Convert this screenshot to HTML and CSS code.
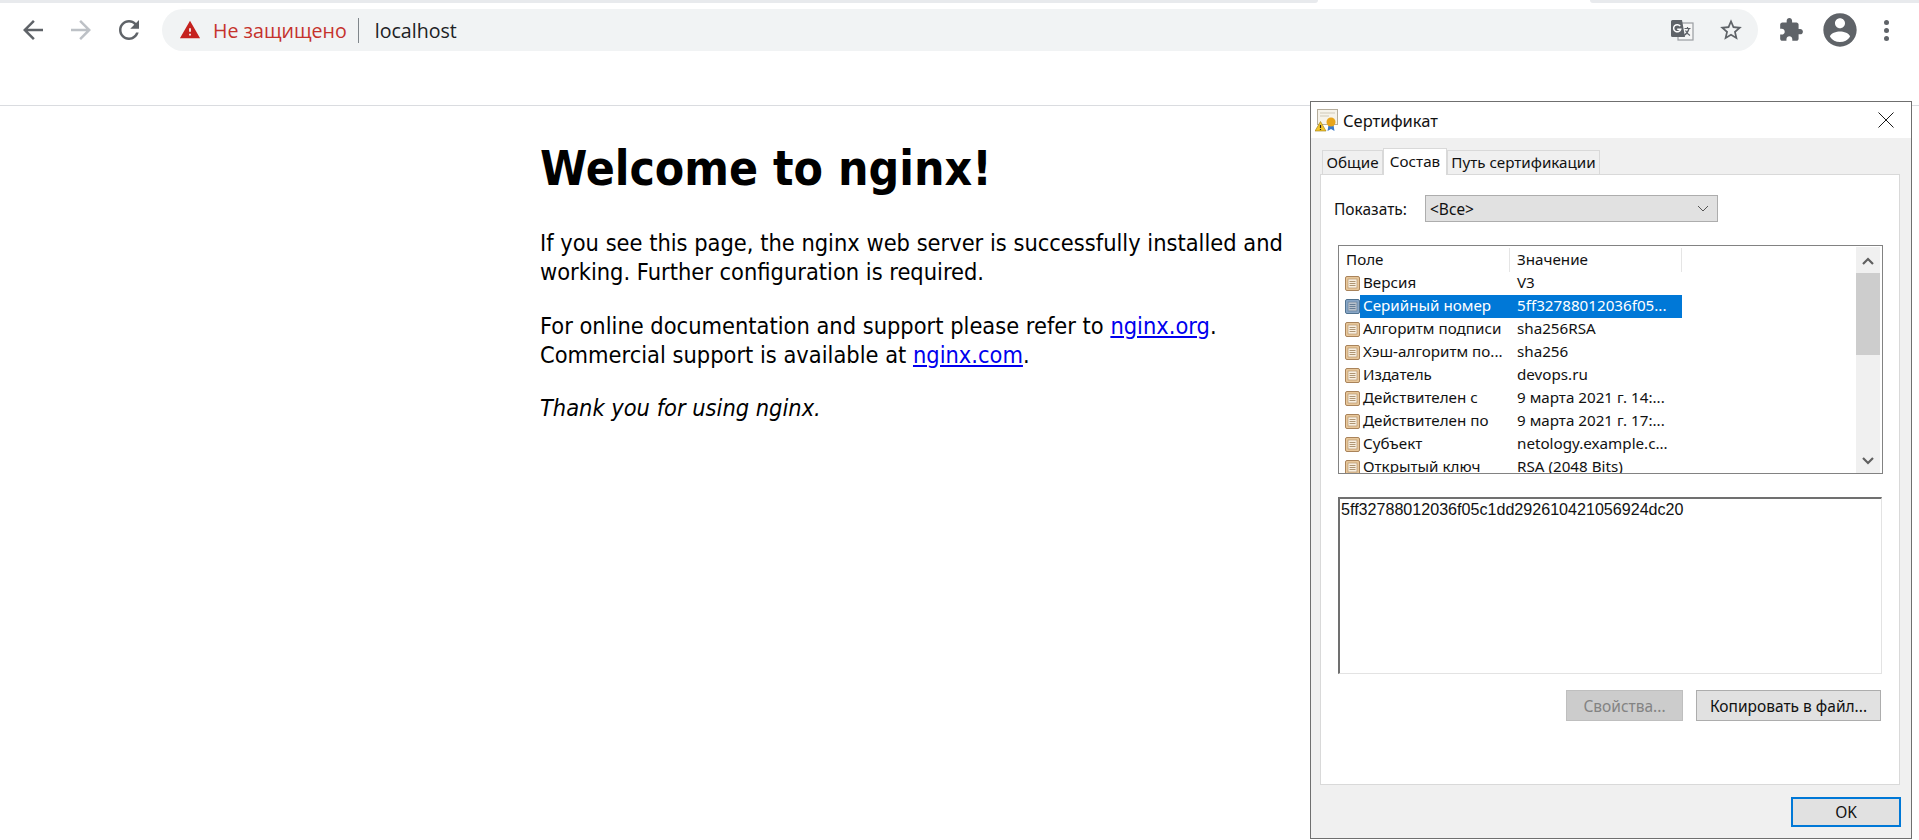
FILE: index.html
```html
<!DOCTYPE html>
<html lang="ru">
<head>
<meta charset="utf-8">
<title>Welcome to nginx!</title>
<link rel="stylesheet" href="styles.css">
</head>
<body>
<svg class="defs" width="0" height="0" aria-hidden="true">
  <symbol id="field" viewBox="0 0 15 15">
    <rect x="0.5" y="0.5" width="14" height="14" rx="1.5" fill="#e8c79a" stroke="#a9835a"/>
    <rect x="3" y="3" width="9" height="9" fill="#f8efe0" stroke="#b59670" stroke-width="0.7"/>
    <path d="M4.5 5.5h6M4.5 7.5h6M4.5 9.5h6" stroke="#a58a68" stroke-width="0.9"/>
  </symbol>
</svg>
<div class="tabstrip"><span class="strip strip-left"></span><span class="strip strip-right"></span></div>
<header class="toolbar">
  <nav class="nav">
    <svg class="nav-icon" viewBox="0 0 24 24"><path d="M20 11H7.83l5.59-5.59L12 4l-8 8 8 8 1.41-1.41L7.83 13H20v-2z"/></svg>
    <svg class="nav-icon nav-off" viewBox="0 0 24 24"><path d="M4 11h12.17l-5.59-5.59L12 4l8 8-8 8-1.41-1.41L16.17 13H4v-2z"/></svg>
    <svg class="nav-icon" viewBox="0 0 24 24"><path d="M17.65 6.35C16.2 4.9 14.21 4 12 4c-4.42 0-7.99 3.58-7.99 8s3.57 8 7.99 8c3.73 0 6.84-2.55 7.73-6h-2.08c-.82 2.33-3.04 4-5.65 4-3.31 0-6-2.69-6-6s2.69-6 6-6c1.66 0 3.14.69 4.22 1.78L13 11h7V4l-2.35 2.35z"/></svg>
  </nav>
  <div class="omnibox">
    <svg class="warn" viewBox="0 0 24 24"><path d="M1 21h22L12 2 1 21zm12-3h-2v-2h2v2zm0-4h-2v-4h2v4z"/></svg>
    <span class="insecure">Не защищено</span>
    <span class="sep"></span>
    <span class="host">localhost</span>
    <span class="grow"></span>
    <svg class="translate" viewBox="0 0 24 22">
      <rect x="8" y="4" width="15" height="17" fill="#f6f6f6" stroke="#9a9da1" stroke-width="1.2"/>
      <path d="M1 2.500A1.500 1.500 0 0 1 2.500 1H12l3 17H2.500A1.500 1.500 0 0 1 1 16.500z" fill="#5f6368"/>
      <path d="M10.200 7.200a3.600 3.600 0 1 0 .5 3H7.200" fill="none" stroke="#fff" stroke-width="1.500"/>
      <path d="M14.500 9.500h6M17.500 8v1.500M19 9.500c-.8 3.400-2.600 5.500-5 7M15.500 11.500c.9 2 2.500 3.700 4.500 5" fill="none" stroke="#5f6368" stroke-width="1.200"/>
    </svg>
    <svg class="star" viewBox="0 0 24 24"><path d="M22 9.240l-7.190-.620L12 2 9.190 8.630 2 9.240l5.460 4.730L5.820 21 12 17.270 18.180 21l-1.630-7.030L22 9.240zM12 15.400l-3.760 2.270 1-4.280-3.320-2.880 4.380-.380L12 6.100l1.710 4.040 4.380.380-3.320 2.880 1 4.280L12 15.400z"/></svg>
  </div>
  <div class="actions">
    <svg class="puzzle" viewBox="0 0 24 24"><path d="M20.500 11H19V7c0-1.100-.9-2-2-2h-4V3.500C13 2.120 11.880 1 10.500 1S8 2.120 8 3.500V5H4c-1.100 0-1.990.9-1.990 2v3.800H3.500c1.490 0 2.700 1.210 2.700 2.700s-1.210 2.700-2.700 2.700H2V20c0 1.100.9 2 2 2h3.800v-1.500c0-1.490 1.210-2.700 2.700-2.700 1.490 0 2.700 1.210 2.700 2.700V22H17c1.100 0 2-.9 2-2v-4h1.500c1.380 0 2.500-1.120 2.500-2.500S21.880 11 20.500 11z"/></svg>
    <svg class="avatar" viewBox="0 0 24 24"><path d="M12 2C6.480 2 2 6.480 2 12s4.480 10 10 10 10-4.480 10-10S17.520 2 12 2zm0 3c1.660 0 3 1.340 3 3s-1.340 3-3 3-3-1.340-3-3 1.340-3 3-3zm0 14.200c-2.500 0-4.710-1.280-6-3.220.03-1.990 4-3.080 6-3.080 1.990 0 5.970 1.090 6 3.080-1.290 1.940-3.500 3.220-6 3.220z"/></svg>
    <span class="dots"><i></i><i></i><i></i></span>
  </div>
</header>
<main class="page">
  <h1>Welcome to nginx!</h1>
  <p>If you see this page, the nginx web server is successfully installed and working. Further configuration is required.</p>
  <p>For online documentation and support please refer to <a href="#">nginx.org</a>.<br>Commercial support is available at <a href="#">nginx.com</a>.</p>
  <p><em>Thank you for using nginx.</em></p>
</main>
<section class="dialog">
  <div class="titlebar">
    <svg class="cert" viewBox="0 0 24 24">
      <rect x="2.500" y="1.500" width="20" height="15" fill="#f6f3ea" stroke="#b5ad9c"/>
      <path d="M5 5h15M5 8h9" stroke="#cfc9b8"/>
      <path d="M13.500 17l-1 6 3.500-2 3.500 2-1-6z" fill="#3a78c8"/>
      <circle cx="16" cy="14" r="4.500" fill="#e8a51c"/>
      <path d="M5.500 13.500 11 23H0z" fill="#f3c52c" stroke="#9a7a10" stroke-width="0.600"/>
      <path d="M5.500 17v3M5.500 21v1" stroke="#222" stroke-width="1.200"/>
    </svg>
    <span class="title">Сертификат</span>
    <svg class="close" viewBox="0 0 16 16"><path d="M.5.500l15 15M15.500.500l-15 15"/></svg>
  </div>
  <div class="body">
    <div class="tabs">
      <span class="tab tab-general">Общие</span>
      <span class="tab tab-active">Состав</span>
      <span class="tab tab-path">Путь сертификации</span>
    </div>
    <div class="panel">
      <div class="show">
        <span class="show-label">Показать:</span>
        <div class="select"><span>&lt;Все&gt;</span>
          <svg class="select-arrow" viewBox="0 0 12 7"><path d="M1 1l5 5 5-5"/></svg>
        </div>
      </div>
      <div class="list">
        <div class="list-main">
          <div class="row head"><span class="c1 hc">Поле</span><span class="c2 hc">Значение</span></div>
          <div class="row"><svg class="ficon"><use href="#field"/></svg><span class="c1">Версия</span><span class="c2">V3</span></div>
          <div class="row selected"><svg class="ficon"><use href="#field"/></svg><span class="c1">Серийный номер</span><span class="c2">5ff32788012036f05...</span></div>
          <div class="row"><svg class="ficon"><use href="#field"/></svg><span class="c1">Алгоритм подписи</span><span class="c2">sha256RSA</span></div>
          <div class="row"><svg class="ficon"><use href="#field"/></svg><span class="c1">Хэш-алгоритм по...</span><span class="c2">sha256</span></div>
          <div class="row"><svg class="ficon"><use href="#field"/></svg><span class="c1">Издатель</span><span class="c2">devops.ru</span></div>
          <div class="row"><svg class="ficon"><use href="#field"/></svg><span class="c1">Действителен с</span><span class="c2">9 марта 2021 г. 14:...</span></div>
          <div class="row"><svg class="ficon"><use href="#field"/></svg><span class="c1">Действителен по</span><span class="c2">9 марта 2021 г. 17:...</span></div>
          <div class="row"><svg class="ficon"><use href="#field"/></svg><span class="c1">Субъект</span><span class="c2">netology.example.c...</span></div>
          <div class="row"><svg class="ficon"><use href="#field"/></svg><span class="c1">Открытый ключ</span><span class="c2">RSA (2048 Bits)</span></div>
        </div>
        <div class="scrollbar">
          <svg class="sb-arrow" viewBox="0 0 12 8"><path d="M1 7l5-5 5 5"/></svg>
          <div class="thumb"></div>
          <span class="grow"></span>
          <svg class="sb-arrow" viewBox="0 0 12 8"><path d="M1 1l5 5 5-5"/></svg>
        </div>
      </div>
      <div class="value">5ff32788012036f05c1dd292610421056924dc20</div>
      <div class="buttons">
        <span class="btn btn-off">Свойства...</span>
        <span class="btn btn-copy">Копировать в файл...</span>
      </div>
    </div>
    <div class="footer"><span class="btn btn-ok">OK</span></div>
  </div>
</section>
</body>
</html>
```
FILE: styles.css
```css
* { box-sizing: border-box; }
html, body { margin: 0; height: 100%; overflow: hidden; background: #fff; }
body { font-family: "DejaVu Sans Condensed", "DejaVu Sans", sans-serif; color: #000; }
.defs { position: absolute; }
.grow { flex: 1; }

.tabstrip { display: flex; justify-content: space-between; height: 3px; }
.strip { background: #e8eaed; height: 3px; }
.strip-left { width: 1318px; border-bottom-right-radius: 3px; }
.strip-right { width: 329px; border-bottom-left-radius: 3px; }

.toolbar { height: 103px; border-bottom: 1px solid #dadce0; display: flex; align-items: flex-start; padding: 6px 0 0 18px; }
.nav { display: flex; gap: 18px; margin-top: 6px; }
.nav-icon { width: 30px; height: 30px; fill: #5f6368; display: block; }
.nav-off { fill: #bdc1c6; }
.omnibox { margin-left: 18px; width: 1596px; height: 42px; border-radius: 21px; background: #f1f3f4; display: flex; align-items: center; padding: 0 14.500px 0 17px; font-family: "Open Sans", sans-serif; font-size: 19.600px; }
.warn { width: 22px; height: 22px; fill: #c5221f; margin-right: 12px; }
.insecure { color: #c5322c; }
.sep { width: 1px; height: 25px; background: #80868b; margin: 0 16px 0 11px; }
.host { color: #202124; }
.translate { width: 24px; height: 22px; margin-right: 24px; }
.star { width: 26px; height: 26px; fill: #5f6368; }
.actions { display: flex; align-items: center; height: 42px; }
.puzzle { width: 26px; height: 26px; fill: #5f6368; margin-left: 20px; }
.avatar { width: 40px; height: 40px; fill: #5f6368; margin-left: 16px; }
.dots { display: flex; flex-direction: column; gap: 3px; margin-left: 24px; }
.dots i { display: block; width: 5px; height: 5px; border-radius: 50%; background: #5f6368; }

.page { width: 800px; margin-left: 540px; padding-top: 34px; font-size: 23.400px; line-height: 29px; }
.page h1 { font-size: 47.700px; line-height: 58px; margin: 0 0 31px; font-weight: 700; }
.page p { margin: 0 0 24.500px; width: 752px; }
.page a { color: #0000ee; }

.dialog { position: absolute; left: 1310px; top: 101px; width: 602px; height: 738px; border: 1px solid #6f6f6f; background: #f0f0f0; font-family: "Noto Sans", sans-serif; font-size: 15.200px; display: flex; flex-direction: column; }
.titlebar { height: 36px; background: #fff; display: flex; align-items: center; padding: 0 17px 0 4px; flex: none; }
.cert { width: 24px; height: 24px; margin-right: 4px; }
.title { font-size: 16.500px; color: #111; flex: 1; }
.close { width: 16px; height: 16px; fill: none; stroke: #1a1a1a; stroke-width: 1; }
.body { flex: 1; display: flex; flex-direction: column; padding: 10px 11px 0 9px; }
.tabs { display: flex; align-items: flex-end; padding-left: 2px; height: 27px; margin-bottom: -1px; position: relative; }
.tab { height: 24px; margin-bottom: 1px; line-height: 22px; text-align: center; background: #f0f0f0; border: 1px solid #d9d9d9; border-bottom: none; white-space: nowrap; color: #111; }
.tab-general { width: 61px; }
.tab-path { width: 153px; }
.tab-active { width: 64px; height: 27px; margin-bottom: 0; background: #fff; line-height: 24px; }
.panel { height: 611px; background: #fff; border: 1px solid #d9d9d9; padding: 20px 16px 0 17px; display: flex; flex-direction: column; }
.show { display: flex; align-items: center; height: 27px; margin-left: -4px; font-size: 15.500px; color: #111; }
.show-label { width: 91px; }
.select { width: 293px; height: 27px; background: #e1e1e1; border: 1px solid #adadad; display: flex; align-items: center; justify-content: space-between; padding: 0 8px 0 4px; }
.select-arrow { width: 12px; height: 7px; fill: none; stroke: #555; }
.list { margin-top: 23px; height: 229px; border: 1px solid #828282; width: 545px; display: flex; overflow: hidden; padding: 2px 2px 0 0; flex: none; }
.list-main { flex: 1; overflow: hidden; padding-left: 6px; }
.row { display: flex; align-items: center; height: 23px; color: #111; white-space: nowrap; flex: none; }
.head { height: 24px; }
.ficon { width: 15px; height: 15px; flex: none; }
.c1 { width: 150px; height: 23px; line-height: 21px; padding-left: 3px; }
.c2 { width: 172px; height: 23px; line-height: 21px; padding-left: 7px; }
.hc.c1 { width: 165px; padding-left: 1px; height: 24px; line-height: 22px; border-right: 1px solid #e5e5e5; }
.hc.c2 { height: 24px; line-height: 22px; border-right: 1px solid #e5e5e5; }
.selected .c1, .selected .c2 { background: #0078d7; color: #fff; }
.selected .ficon { filter: hue-rotate(175deg) brightness(0.800); }
.scrollbar { width: 24px; height: 226px; margin-top: -1px; background: #f0f0f0; display: flex; flex-direction: column; align-items: center; }
.sb-arrow { width: 12px; height: 8px; margin: 10px 0 8px; fill: none; stroke: #606060; stroke-width: 2.200; flex: none; }
.thumb { width: 24px; height: 82px; background: #cdcdcd; flex: none; }
.value { margin-top: 23px; width: 544px; height: 177px; flex: none; border: 1px solid #e3e3e3; border-top: 2px solid #707070; border-left: 2px solid #707070; padding: 1px 1px; font-family: "Liberation Sans", sans-serif; font-size: 16.100px; line-height: 18px; color: #111; }
.buttons { display: flex; justify-content: flex-end; gap: 13px; margin-top: 16px; padding-right: 2px; font-size: 15.500px; }
.btn { display: flex; align-items: center; justify-content: center; height: 31px; border: 1px solid #adadad; background: #e1e1e1; color: #111; }
.btn-off { width: 117px; background: #cccccc; border-color: #bfbfbf; color: #838383; }
.btn-copy { width: 185px; }
.footer { display: flex; justify-content: flex-end; padding: 12px 0 0; margin-right: -1px; font-size: 15.500px; }
.btn-ok { width: 110px; height: 30px; border: 2px solid #0078d7; }
```
